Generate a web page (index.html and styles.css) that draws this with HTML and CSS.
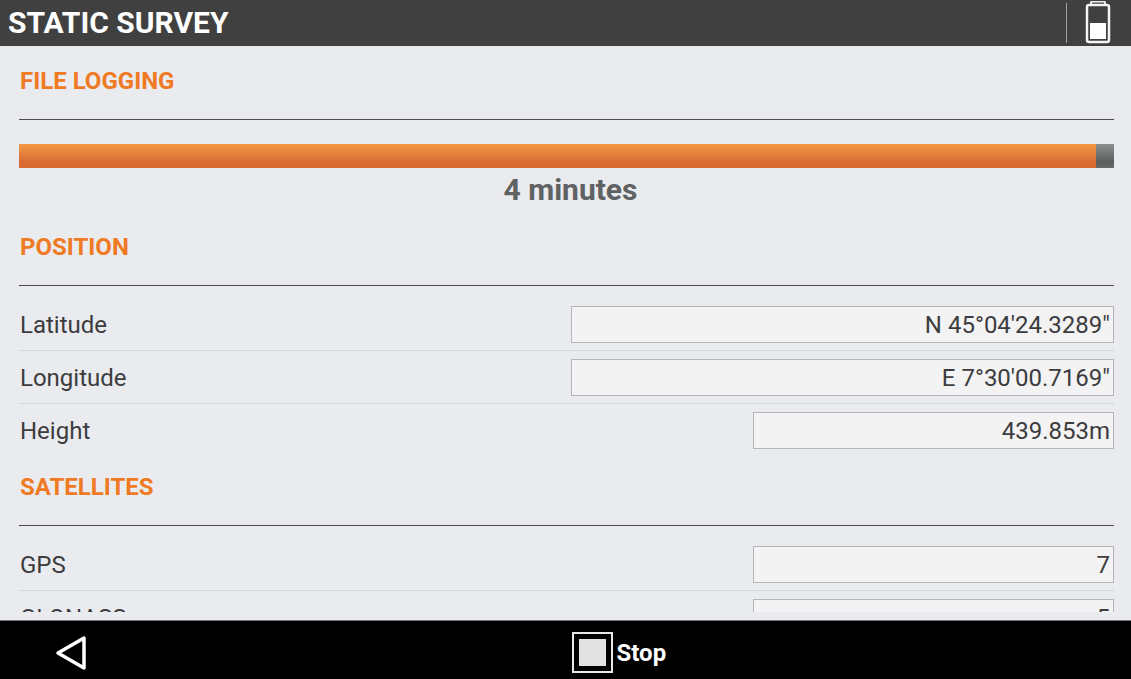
FILE: index.html
```html
<!DOCTYPE html>
<html lang="en">
<head>
    <meta charset="UTF-8">
    <meta name="viewport" content="width=device-width, initial-scale=1.0">
    <title>Static Survey</title>
    <link rel="stylesheet" href="styles.css">
</head>
<body>
    <header class="topbar">
        <h1>STATIC SURVEY</h1>
        <div class="status">
            <svg class="battery" width="26" height="44" viewBox="0 0 26 44" role="img" aria-label="Battery">
                <path d="M6 4V2q0-1.500 1.500-1.500h11q1.500 0 1.500 1.500v2" fill="none" stroke="#eee" stroke-width="2"/>
                <rect x="2" y="4" width="22" height="37" rx="2" fill="none" stroke="#f4f4f4" stroke-width="2.500"/>
                <rect x="5" y="22" width="16" height="16" fill="#fff"/>
            </svg>
        </div>
    </header>

    <main class="content">
        <section>
            <h2>FILE LOGGING</h2>
            <div class="logging">
                <progress id="logProgress" value="98.4" max="100" aria-labelledby="logTime"></progress>
                <label id="logTime" for="logProgress">4 minutes</label>
            </div>
        </section>

        <section>
            <h2>POSITION</h2>
            <div class="rows">
                <div class="row">
                    <label for="latitude">Latitude</label>
                    <input type="text" id="latitude" class="wide" value="N 45°04'24.3289&quot;" readonly>
                </div>
                <div class="row">
                    <label for="longitude">Longitude</label>
                    <input type="text" id="longitude" class="wide" value="E 7°30'00.7169&quot;" readonly>
                </div>
                <div class="row">
                    <label for="height">Height</label>
                    <input type="text" id="height" value="439.853m" readonly>
                </div>
            </div>
        </section>

        <section>
            <h2>SATELLITES</h2>
            <div class="rows">
                <div class="row">
                    <label for="gps">GPS</label>
                    <input type="text" id="gps" value="7" readonly>
                </div>
                <div class="row">
                    <label for="glonass">GLONASS</label>
                    <input type="text" id="glonass" value="5" readonly>
                </div>
            </div>
        </section>
    </main>

    <footer class="bottombar">
        <button type="button" class="back" aria-label="Back">
            <svg width="32" height="36" viewBox="0 0 32 36">
                <path d="M29 3v30L3 18z" fill="none" stroke="#fff" stroke-width="3.500" stroke-linejoin="round"/>
            </svg>
        </button>
        <button type="button" class="stop">
            <svg width="41" height="41" viewBox="0 0 41 41">
                <rect x="1" y="1" width="39" height="39" fill="none" stroke="#e8e8e8" stroke-width="2"/>
                <rect x="7" y="7" width="27" height="27" fill="#e2e2e2"/>
            </svg>
            Stop
        </button>
    </footer>
</body>
</html>
```

FILE: styles.css
```css
* {
    box-sizing: border-box;
}

body {
    display: flex;
    flex-direction: column;
    height: 100vh;
    margin: 0;
    background: #e9ebee;
    color: #3c3c3e;
    font-family: Roboto, Arial, sans-serif;
    font-size: 24px;
}

.topbar {
    display: flex;
    justify-content: space-between;
    align-items: center;
    height: 46px;
    padding: 0 20px 0 8px;
    background: #404040;
    color: #fff;
}

h1 {
    margin: 0;
    font-size: 30px;
    line-height: 44px;
}

.status {
    height: 40px;
    display: flex;
    align-items: center;
    padding-left: 18px;
    border-left: 1px solid #a0a0a0;
}

.content {
    flex: 1;
    min-height: 0;
    margin-bottom: 8px;
    padding: 5px 17px 0 19px;
    overflow: hidden;
}

h2 {
    margin: 0;
    padding: 16px 1px 24px;
    border-bottom: 1px solid #4c4c50;
    color: #f07a24;
    font-size: 24px;
    line-height: 28px;
}

.logging {
    padding: 24px 0 5px;
    text-align: center;
}

.logging label {
    display: block;
    padding-left: 8px;
    color: #5f6163;
    font-size: 30px;
    font-weight: bold;
    line-height: 44px;
}

progress {
    display: block;
    width: 100%;
    height: 24px;
    border: none;
    appearance: none;
}

progress::-webkit-progress-bar {
    background: linear-gradient(#8c8f90, #5a5d5b 75%, #686b69);
}

progress::-webkit-progress-value {
    background: linear-gradient(#f39a44, #d96b32 75%, #d96b32);
}

.rows {
    padding-top: 12px;
}

.row {
    display: flex;
    justify-content: space-between;
    align-items: center;
    padding: 8px 0 7px;
    border-bottom: 1px solid #d3d5d8;
}

.row:last-child {
    border-bottom-color: transparent;
}

.row label {
    padding-left: 1px;
}

.row input {
    width: 33%;
    height: 37px;
    padding: 0 3px;
    border: 1px solid #b4b5b8;
    border-radius: 0;
    background: #f3f3f3;
    color: inherit;
    font: inherit;
    text-align: right;
}

.row .wide {
    width: calc(50% - 4px);
}

.bottombar {
    display: grid;
    grid-template-columns: 1fr 1fr;
    align-items: center;
    height: 59px;
    border-top: 1px solid #77787a;
    background: #000;
}

.bottombar button {
    display: flex;
    align-items: center;
    gap: 4px;
    justify-self: start;
    margin: 5px 0 0 6px;
    padding: 0;
    border: none;
    background: none;
    color: #fff;
    font: bold 24px Roboto, Arial, sans-serif;
    cursor: pointer;
}

.bottombar .back {
    margin-left: 55px;
}
```
